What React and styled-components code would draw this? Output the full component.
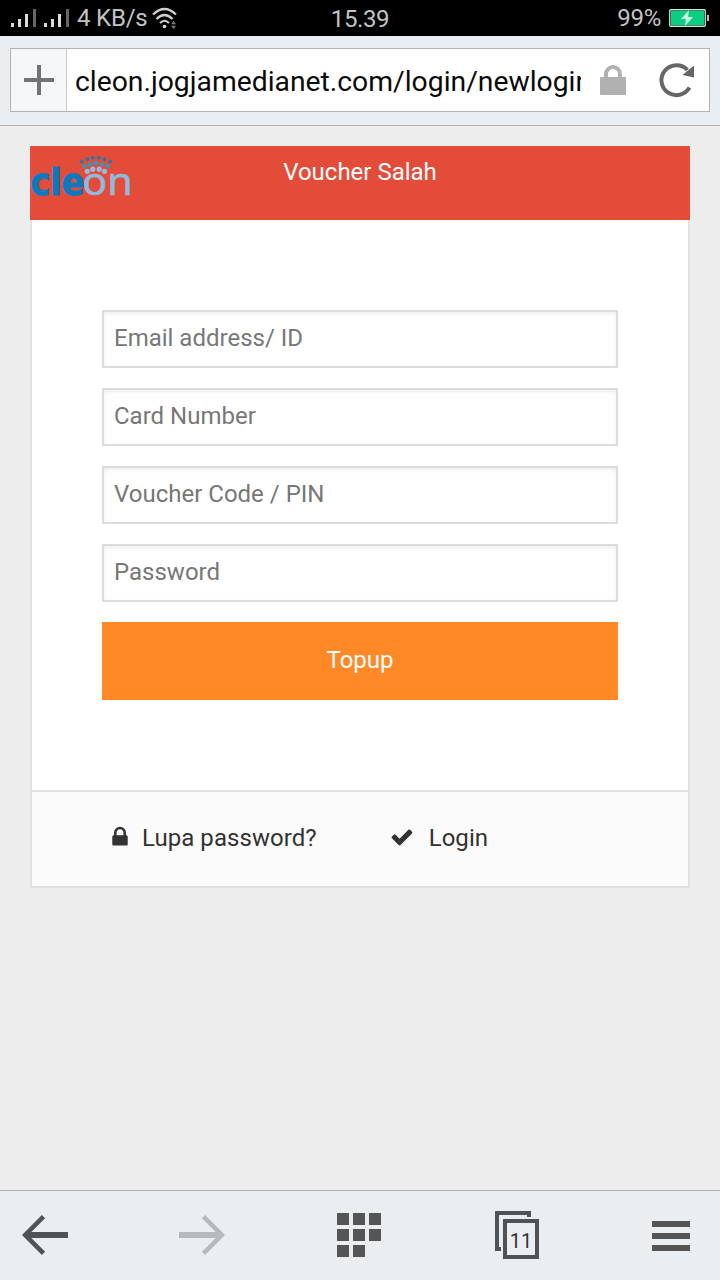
import React from "react";
import styled, { createGlobalStyle } from "styled-components";

const GlobalStyle = createGlobalStyle`
  * { box-sizing: border-box; }
  body { margin: 0; background: #ededed; font-family: Roboto, "Liberation Sans", sans-serif; }
  svg { display: block; flex: none; }
`;

const Screen = styled.div`
  width: 720px;
  height: 1280px;
  display: flex;
  flex-direction: column;
  overflow: hidden;
  background: #ededed;
`;

const StatusBar = styled.header`
  height: 36px;
  flex: none;
  display: grid;
  grid-template-columns: 1fr auto 1fr;
  grid-template-rows: 36px;
  align-items: center;
  padding: 0 11px;
  background: #000;
  color: #c3c3c3;
  font-size: 24px;
  line-height: 36px;
`;

const StatusGroup = styled.div`
  display: flex;
  align-items: center;
  justify-content: ${(p) => (p.$end ? "flex-end" : "flex-start")};
  gap: ${(p) => p.$gap || "8px"};
`;

const StatusText = styled.span`
  white-space: nowrap;
  letter-spacing: ${(p) => p.$tracking || "0"};
  padding-top: ${(p) => p.$drop || "0"};
`;

const AddressBar = styled.div`
  height: 90px;
  flex: none;
  padding: 12px 10px 13px;
  background: #ebeef1;
  border-bottom: 1px solid #b3b4b6;
`;

const AddressField = styled.div`
  height: 64px;
  display: flex;
  align-items: center;
  border: 1px solid #b1b2b3;
  background: #fff;
`;

const AddButton = styled.button`
  width: 56px;
  height: 100%;
  flex: none;
  display: grid;
  place-items: center;
  padding: 0;
  border: 0;
  border-right: 1px solid #c9cacb;
  background: #f6f7f9;
`;

const Url = styled.div`
  width: 506px;
  margin-left: 8px;
  flex: none;
  overflow: hidden;
  white-space: nowrap;
  color: #0a0a0a;
  font-size: 28.3px;
  line-height: 40px;
  padding-top: 3px;
`;

const FieldIcons = styled.div`
  display: flex;
  align-items: center;
  gap: 32px;
  margin-left: 19px;
`;

const Page = styled.main`
  flex: 1;
  padding: 20px 30px;
`;

const Card = styled.section`
  height: 742px;
  display: flex;
  flex-direction: column;
`;

const CardHeader = styled.div`
  height: 74px;
  flex: none;
  display: grid;
  grid-template-columns: 1fr auto 1fr;
  align-items: start;
  background: #e44c3a;
`;

const Title = styled.h1`
  margin: 0;
  padding-top: 8px;
  color: #fff;
  font-size: 24px;
  font-weight: 400;
  line-height: 36px;
`;

const Form = styled.form`
  flex: 1;
  display: flex;
  flex-direction: column;
  gap: 20px;
  padding: 90px 70px 0;
  background: #fff;
  border: 2px solid #e1e1e1;
  border-top: 0;
`;

const Input = styled.input`
  width: 100%;
  height: 58px;
  padding: 0 10px 2px;
  border: 2px solid #dcdcdc;
  border-radius: 0;
  outline: 0;
  background: #fff;
  box-shadow: inset 0 2px 4px rgba(0, 0, 0, 0.07);
  font: 24px/36px Roboto, "Liberation Sans", sans-serif;
  &::placeholder { color: #777; opacity: 1; }
`;

const Submit = styled.button`
  height: 78px;
  padding: 0 0 2px;
  border: 0;
  background: #ff8827;
  color: #fff;
  font: 24px/36px Roboto, "Liberation Sans", sans-serif;
`;

const CardFooter = styled.div`
  height: 96px;
  flex: none;
  display: flex;
  align-items: flex-start;
  gap: 73px;
  padding: 28px 76px 0;
  border: 2px solid #e1e1e1;
  border-top: 0;
  background: #fbfbfb;
`;

const FooterLink = styled.a`
  display: flex;
  align-items: center;
  gap: ${(p) => p.$gap};
  color: #333;
  font-size: 24px;
  line-height: 36px;
  letter-spacing: 0.05px;
  white-space: nowrap;
  svg { margin-bottom: 2px; }
`;

const NavBar = styled.nav`
  height: 90px;
  flex: none;
  display: flex;
  align-items: center;
  padding: 0 0 1px 22px;
  border-top: 1px solid #aeafb0;
  background: #ebeef1;
`;

const NavItem = styled.div`
  margin-left: ${(p) => p.$before || "0"};
  padding-top: ${(p) => p.$drop || "0"};
`;

const Signal = () => (
  <svg width="25" height="18" viewBox="0 0 25 18">
    <path fill="#dcdcdc" d="M0 14h3v4H0zM7 10h3v8H7zM14 5h3v13h-3z" />
    <path fill="#666" d="M22 0h3v18h-3z" />
  </svg>
);

const Wifi = () => (
  <svg width="26" height="22" viewBox="0 0 26 22">
    <g fill="none" stroke="#cfcfcf" strokeWidth="2.2">
      <path d="M1 7.5Q12.5-3.5 24 7.5M4.5 12Q12.5 4 20.5 12M8 16Q12.5 11.5 17 16" />
    </g>
    <circle cx="12.5" cy="19.5" r="1.8" fill="#ddd" />
    <path fill="#777" d="M19 17.2L21.5 14l2.5 3.2zM19 18.8h5L21.5 22z" />
  </svg>
);

const Battery = () => (
  <svg width="40" height="18" viewBox="0 0 40 18">
    <rect x=".75" y=".75" width="35.5" height="16.5" rx="1" fill="#000" stroke="#b9f2d5" strokeWidth="1.3" />
    <path fill="#0bcf80" d="M2 2h33v14H2z" />
    <path fill="#c9ffe4" d="M20 1l-8 9h5l-1 7 8-9h-5z" />
    <path fill="#bbb" d="M38 6h2v6h-2z" />
  </svg>
);

const UrlLock = () => (
  <svg width="27" height="30" viewBox="0 0 27 30">
    <path fill="none" stroke="#b1b1b1" strokeWidth="4" d="M6 14V9a7 7 0 0 1 14 0v5" />
    <rect y="12" width="26" height="18" rx="1" fill="#b1b1b1" />
  </svg>
);

const Reload = () => (
  <svg width="36" height="36" viewBox="0 0 36 36">
    <path fill="none" stroke="#666" strokeWidth="4" d="M30.5 25.6A15 15 0 1 1 28.5 8" />
    <path fill="#666" d="M35 3.5v12L23.5 13z" />
  </svg>
);

const crown = [
  { r: 1.9, fill: "#2878a6", points: [[51.7, 15.4], [57.3, 13], [62.8, 11.8], [68.8, 11.8], [74.5, 13.1], [80.2, 15.4]] },
  { r: 2.3, fill: "#3e93bd", points: [[54.6, 20.3], [60, 18.2], [65.8, 17.1], [72, 18.2], [77.7, 20.3]] },
  { r: 2.6, fill: "#9bb9dc", points: [[57.3, 25.3], [62.8, 23.2], [69.2, 23.2], [74.5, 25.3]] },
];

const Logo = () => (
  <svg width="104" height="60" viewBox="0 0 104 60">
    <text x="0.5" y="48.7" fill="#0a79c0" stroke="#0a79c0" strokeWidth="1" fontFamily='"DejaVu Sans", sans-serif' fontSize="37.5" fontWeight="700" textLength="54" lengthAdjust="spacingAndGlyphs">cle</text>
    <text x="52.3" y="49" fill="#8fb9df" stroke="#8fb9df" strokeWidth=".6" fontFamily='"Noto Sans", sans-serif' fontSize="38.5" textLength="50.5" lengthAdjust="spacingAndGlyphs">on</text>
    {crown.map((row) => (
      <g key={row.fill} fill={row.fill}>
        {row.points.map(([x, y]) => <circle key={x} cx={x} cy={y} r={row.r} />)}
      </g>
    ))}
  </svg>
);

const LockIcon = () => (
  <svg width="24" height="24" viewBox="0 0 1792 1792" fill="#333">
    <path d="M640 768h512v-192q0-106-75-181t-181-75-181 75-75 181v192zm832 96v576q0 40-28 68t-68 28h-960q-40 0-68-28t-28-68v-576q0-40 28-68t68-28h32v-192q0-184 132-316t316-132 316 132 132 316v192h32q40 0 68 28t28 68z" />
  </svg>
);

const CheckIcon = () => (
  <svg width="24" height="24" viewBox="0 0 1792 1792" fill="#333">
    <path d="M1671 566q0 40-28 68l-724 724-136 136q-28 28-68 28t-68-28l-136-136-362-362q-28-28-28-68t28-68l136-136q28-28 68-28t68 28l294 295 656-657q28-28 68-28t68 28l136 136q28 28 28 68z" />
  </svg>
);

const Arrow = ({ color, forward }) => (
  <svg width="46" height="42" viewBox="0 0 46 42">
    <g transform={forward ? "translate(46 0) scale(-1 1)" : undefined} fill="none" stroke={color}>
      <path strokeWidth="6" d="M6 21h40" />
      <path strokeWidth="4.6" d="M21.5 2.6L3.2 21l18.3 18.4" />
    </g>
  </svg>
);

const Apps = () => (
  <svg width="44" height="44" viewBox="0 0 44 44">
    <path fill="#555" d="M0 0h12v12H0zM16 0h12v12H16zM32 0h12v12H32zM0 16h12v12H0zM16 16h12v12H16zM32 16h12v12H32zM0 32h12v12H0zM16 32h12v12H16z" />
  </svg>
);

const Tabs = () => (
  <svg width="44" height="48" viewBox="0 0 44 48">
    <path fill="none" stroke="#505356" strokeWidth="4" d="M6 38H2V2h32v4" />
    <rect x="10" y="10" width="32" height="36" fill="none" stroke="#505356" strokeWidth="4" />
    <text x="26" y="37" fill="#333" fontFamily="Roboto, sans-serif" fontSize="20" textAnchor="middle">11</text>
  </svg>
);

const Menu = () => (
  <svg width="38" height="30" viewBox="0 0 38 30">
    <path fill="#555" d="M0 0h38v6H0zM0 12h38v6H0zM0 24h38v6H0z" />
  </svg>
);

const fields = [
  ["Email address/ ID", "text"],
  ["Card Number", "text"],
  ["Voucher Code / PIN", "text"],
  ["Password", "password"],
];

export default function App() {
  return (
    <Screen>
      <GlobalStyle />
      <StatusBar>
        <StatusGroup $gap="8px">
          <Signal />
          <Signal />
          <StatusGroup $gap="4px">
            <StatusText $tracking="-0.2px">4 KB/s</StatusText>
            <Wifi />
          </StatusGroup>
        </StatusGroup>
        <StatusText $tracking="-0.4px" $drop="2px">15.39</StatusText>
        <StatusGroup $end>
          <StatusText $tracking="-0.3px">99%</StatusText>
          <Battery />
        </StatusGroup>
      </StatusBar>
      <AddressBar>
        <AddressField>
          <AddButton aria-label="Add">
            <svg width="30" height="30" viewBox="0 0 30 30">
              <path fill="#737373" d="M13 0h4v13h13v4H17v13h-4V17H0v-4h13z" />
            </svg>
          </AddButton>
          <Url>cleon.jogjamedianet.com/login/newlogin</Url>
          <FieldIcons>
            <UrlLock />
            <Reload />
          </FieldIcons>
        </AddressField>
      </AddressBar>
      <Page>
        <Card>
          <CardHeader>
            <Logo />
            <Title>Voucher Salah</Title>
          </CardHeader>
          <Form>
            {fields.map(([label, type]) => (
              <Input key={label} type={type} placeholder={label} />
            ))}
            <Submit type="button">Topup</Submit>
          </Form>
          <CardFooter>
            <FooterLink $gap="10px"><LockIcon />Lupa password?</FooterLink>
            <FooterLink $gap="15px"><CheckIcon />Login</FooterLink>
          </CardFooter>
        </Card>
      </Page>
      <NavBar>
        <NavItem><Arrow color="#505356" /></NavItem>
        <NavItem $before="111px"><Arrow color="#b6babd" forward /></NavItem>
        <NavItem $before="112px"><Apps /></NavItem>
        <NavItem $before="114px"><Tabs /></NavItem>
        <NavItem $before="113px" $drop="2px"><Menu /></NavItem>
      </NavBar>
    </Screen>
  );
}
